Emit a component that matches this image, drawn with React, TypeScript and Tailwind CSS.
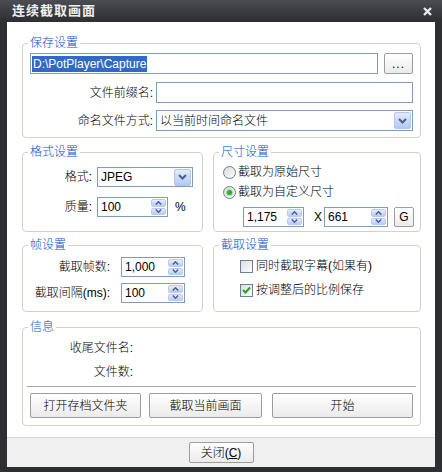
import React from "react";

function DropBtn() {
  return (
    <div className="w-[17px] h-[17px] mr-[1px] rounded-[2px] border border-[#b2c6f2] bg-linear-to-b from-[#e4ecfe] to-[#b3c8f6] flex items-center justify-center">
      <svg width="9" height="6" viewBox="0 0 9 6">
        <path d="M1 1 L4.5 4.5 L8 1" stroke="#4d6185" strokeWidth="2" fill="none" />
      </svg>
    </div>
  );
}

function SpinBtns() {
  return (
    <div className="flex flex-col w-[16px] h-full py-[1px] pr-[1px] gap-[1px]">
      <div className="flex-1 rounded-[2px] border border-[#b8cbf4] bg-linear-to-b from-[#e6edfd] to-[#b9ccf6] flex items-center justify-center">
        <svg width="7" height="4" viewBox="0 0 7 4">
          <path d="M0.8 3.5 L3.5 0.8 L6.2 3.5" stroke="#4d6185" strokeWidth="1.5" fill="none" />
        </svg>
      </div>
      <div className="flex-1 rounded-[2px] border border-[#b8cbf4] bg-linear-to-b from-[#e6edfd] to-[#b9ccf6] flex items-center justify-center">
        <svg width="7" height="4" viewBox="0 0 7 4">
          <path d="M0.8 0.5 L3.5 3.2 L6.2 0.5" stroke="#4d6185" strokeWidth="1.5" fill="none" />
        </svg>
      </div>
    </div>
  );
}

function SpinBox({ value, className }: { value: string; className: string }) {
  return (
    <div className={`h-[20px] border border-[#7f9db9] bg-white flex items-center ${className}`}>
      <span className="flex-1 pl-[3px] leading-[18px]">{value}</span>
      <SpinBtns />
    </div>
  );
}

function Select({ value, className }: { value: string; className: string }) {
  return (
    <div className={`border border-[#7f9db9] bg-white flex items-center ${className}`}>
      <span className="flex-1 pl-[3px] leading-[18px]">{value}</span>
      <DropBtn />
    </div>
  );
}

function Btn({ children, className }: { children: React.ReactNode; className: string }) {
  return (
    <div
      className={`border border-[#9c9c9c] rounded-[2px] bg-linear-to-b from-[#ffffff] to-[#ebebeb] flex items-center justify-center text-[12px] text-black ${className}`}
    >
      {children}
    </div>
  );
}

function Group({
  title,
  className,
  children,
}: {
  title: string;
  className: string;
  children: React.ReactNode;
}) {
  return (
    <fieldset className={`border border-[#d3d2c8] rounded-[4px] min-w-0 ${className}`}>
      <legend className="ml-[5px] px-[2px] text-[#0b4fc8] text-[12px] leading-[16px]">{title}</legend>
      {children}
    </fieldset>
  );
}

function Radio({ checked }: { checked: boolean }) {
  return (
    <div className="w-[13px] h-[13px] rounded-full border border-[#6a7f9a] bg-linear-to-br from-[#d8d8d4] to-[#ffffff] flex items-center justify-center">
      {checked && (
        <div className="w-[5px] h-[5px] rounded-full bg-[#2fae2f] shadow-[0_0_1px_1px_#9ee09e]" />
      )}
    </div>
  );
}

function Check({ checked }: { checked: boolean }) {
  return (
    <div className="w-[13px] h-[13px] border border-[#6a7f9a] bg-linear-to-br from-[#dcdcd8] to-[#ffffff] flex items-center justify-center">
      {checked && (
        <svg width="9" height="8" viewBox="0 0 9 8">
          <path d="M1 4 L3.5 6.5 L8 1.5" stroke="#21a121" strokeWidth="2" fill="none" />
        </svg>
      )}
    </div>
  );
}

export default function App() {
  return (
    <div className="w-[442px] h-[472px] bg-[#2d2f33] flex flex-col font-['Liberation_Sans','Noto_Sans_CJK_SC',sans-serif] text-[12px] font-light text-black overflow-hidden">
      {/* title bar */}
      <div className="h-[22px] flex items-center justify-between bg-linear-to-b from-[#4b4d52] to-[#2c2e32]">
        <span className="pl-[12px] text-[13px] font-bold text-[#f0f0f0] leading-[16px] tracking-[1px]">
          连续截取画面
        </span>
        <svg width="9" height="9" viewBox="0 0 9 9" className="mr-[10px]">
          <path d="M1 1 L8 8 M8 1 L1 8" stroke="#e8e8e8" strokeWidth="2.4" />
        </svg>
      </div>

      {/* body */}
      <div className="flex-1 mx-[7px] bg-white flex flex-col pl-[15px] pr-[14px]">
        {/* 保存设置 */}
        <Group title="保存设置" className="mt-[13px] pb-[6px]">
          <div className="mt-[2px] px-[7px] flex gap-[6px]">
            <div className="flex-1 h-[21px] border border-[#7f9db9] flex items-center pl-[1px]">
              <span className="bg-[#316ac5] text-white leading-[16px] px-[1px]">D:\PotPlayer\Capture</span>
            </div>
            <Btn className="w-[29px] h-[21px]">
              <span className="leading-[12px] tracking-[1px]">...</span>
            </Btn>
          </div>
          <div className="mt-[8px] flex items-center">
            <span className="w-[130px] text-right">文件前缀名:</span>
            <div className="ml-[3px] w-[257px] h-[21px] border border-[#7f9db9]" />
          </div>
          <div className="mt-[7px] flex items-center">
            <span className="w-[130px] text-right">命名文件方式:</span>
            <Select value="以当前时间命名文件" className="ml-[3px] w-[257px] h-[21px]" />
          </div>
        </Group>

        {/* 格式 / 尺寸 */}
        <div className="mt-[6px] flex gap-[10px]">
          <Group title="格式设置" className="w-[181px] pb-[14px]">
            <div className="mt-[7px] flex items-center">
              <span className="w-[69px] text-right">格式:</span>
              <Select value="JPEG" className="ml-[5px] w-[96px] h-[20px]" />
            </div>
            <div className="mt-[10px] flex items-center">
              <span className="w-[69px] text-right">质量:</span>
              <SpinBox value="100" className="ml-[5px] w-[71px]" />
              <span className="ml-[7px]">%</span>
            </div>
          </Group>
          <Group title="尺寸设置" className="flex-1 pb-[4px]">
            <div className="mt-[4px] h-[16px] pl-[9px] flex items-center">
              <Radio checked={false} />
              <span className="ml-[2px]">截取为原始尺寸</span>
            </div>
            <div className="mt-[4px] h-[16px] pl-[9px] flex items-center">
              <Radio checked={true} />
              <span className="ml-[2px]">截取为自定义尺寸</span>
            </div>
            <div className="mt-[7px] pl-[29px] flex items-center">
              <SpinBox value="1,175" className="w-[61px]" />
              <span className="w-[20px] pl-[10px]">X</span>
              <SpinBox value="661" className="w-[64px]" />
              <Btn className="ml-[6px] w-[20px] h-[20px]">G</Btn>
            </div>
          </Group>
        </div>

        {/* 帧 / 截取 */}
        <div className="mt-[5px] flex gap-[10px]">
          <Group title="帧设置" className="w-[181px] pb-[8px]">
            <div className="mt-[4px] flex items-center">
              <span className="w-[87px] text-right">截取帧数:</span>
              <SpinBox value="1,000" className="ml-[11px] w-[64px]" />
            </div>
            <div className="mt-[6px] flex items-center">
              <span className="w-[87px] text-right whitespace-nowrap">截取间隔(ms):</span>
              <SpinBox value="100" className="ml-[11px] w-[64px]" />
            </div>
          </Group>
          <Group title="截取设置" className="flex-1 pb-[8px]">
            <div className="mt-[5px] h-[16px] pl-[26px] flex items-center">
              <Check checked={false} />
              <span className="ml-[3px]">同时截取字幕(如果有)</span>
            </div>
            <div className="mt-[8px] h-[16px] pl-[26px] flex items-center">
              <Check checked={true} />
              <span className="ml-[3px]">按调整后的比例保存</span>
            </div>
          </Group>
        </div>

        {/* 信息 */}
        <Group title="信息" className="mt-[7px] pb-[7px]">
          <div className="mt-[5px] h-[16px] flex items-center">
            <span className="w-[110px] text-right">收尾文件名:</span>
          </div>
          <div className="mt-[8px] h-[16px] flex items-center">
            <span className="w-[110px] text-right">文件数:</span>
          </div>
          <div className="mt-[6px] mx-[4px] h-px bg-[#a8a8a8]" />
          <div className="mt-[6px] pl-[7px] flex items-center">
            <Btn className="w-[111px] h-[25px]">打开存档文件夹</Btn>
            <Btn className="ml-[8px] w-[113px] h-[25px]">截取当前画面</Btn>
            <Btn className="ml-[10px] w-[141px] h-[25px]">开始</Btn>
          </div>
        </Group>
      </div>

      {/* footer */}
      <div className="h-[30px] mx-[7px] border-t border-[#d6d6d6] bg-[#f0f0f0] flex justify-center">
        <Btn className="mt-[4px] w-[65px] h-[21px]">
          <span>
            关闭(<span className="underline">C</span>)
          </span>
        </Btn>
      </div>
      <div className="h-[5px]" />
    </div>
  );
}
